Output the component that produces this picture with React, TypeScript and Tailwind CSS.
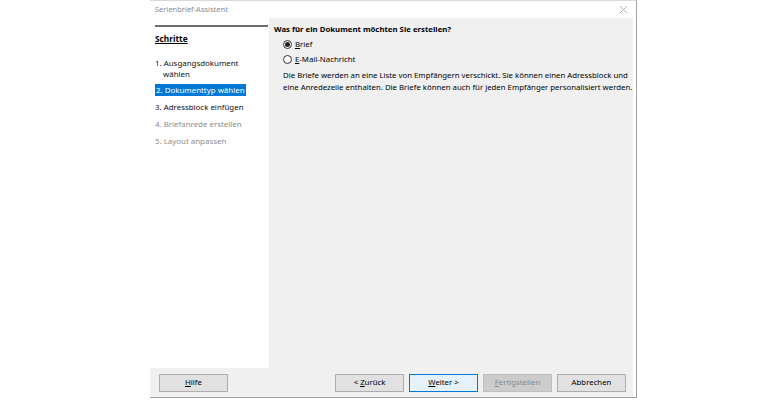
import React from "react";

const font = { fontFamily: '"Noto Sans", "Open Sans", Arial, sans-serif' };

function Btn({ children, variant }: { children: React.ReactNode; variant?: "primary" | "disabled" }) {
  const cls =
    variant === "primary"
      ? "border-[#0078d7] bg-[#e5f1fb] text-[#000]"
      : variant === "disabled"
      ? "border-[#bfbfbf] bg-[#cccccc] text-[#8a8a8a]"
      : "border-[#adadad] bg-[#e1e1e1] text-[#000]";
  return (
    <div className={`w-[69px] h-[18px] border flex items-center justify-center text-[7.8px] leading-none ${cls}`}>
      {children}
    </div>
  );
}

function Radio({ checked }: { checked?: boolean }) {
  return (
    <div className="w-[9px] h-[9px] rounded-full border border-[#333] bg-white flex items-center justify-center">
      {checked && <div className="w-[5px] h-[5px] rounded-full bg-[#222]" />}
    </div>
  );
}

export default function App() {
  return (
    <div className="w-[768px] h-[400px] bg-white pl-[150px]" style={font}>
      <div className="w-[487px] h-[398px] flex flex-col border-t border-t-[#d9d9d9] border-r border-r-[#a0a0a0] border-b border-b-[#a0a0a0] bg-white">
        {/* title bar */}
        <div className="h-[17px] flex items-center justify-between pl-[5px] pr-[8px]">
          <span className="text-[7.5px] text-[#8a8a8a] leading-none">Serienbrief-Assistent</span>
          <svg width="9" height="9" viewBox="0 0 9 9" className="text-[#a8a8a8]">
            <path d="M1 1 L8 8 M8 1 L1 8" stroke="currentColor" strokeWidth="0.9" />
          </svg>
        </div>
        {/* body */}
        <div className="flex flex-1 pr-[3px]">
          <div className="w-[119px] bg-white pl-[5px] pt-[7px] text-[7.9px] leading-[11px]">
            <div className="h-[2px] bg-[#6e6e6e] w-[113px]" />
            <div className="mt-[6px] font-bold underline text-[#000] text-[8.3px]">Schritte</div>
            <div className="mt-[14px] text-[#111]">1. Ausgangsdokument</div>
            <div className="pl-[8px] text-[#111]">wählen</div>
            <div className="mt-[5px]">
              <span className="bg-[#0078d7] text-white px-[1px] py-[1px]">2. Dokumenttyp wählen</span>
            </div>
            <div className="mt-[6px] text-[#111]">3. Adressblock einfügen</div>
            <div className="mt-[6px] text-[#8d8d8d]">4. Briefanrede erstellen</div>
            <div className="mt-[6px] text-[#8d8d8d]">5. Layout anpassen</div>
          </div>
          <div className="flex-1 bg-[#f0f0f0] pl-[5px] pt-[5px] text-[7.8px] leading-[12px] text-[#000]">
            <div className="font-bold text-[#000]">Was für ein Dokument möchten Sie erstellen?</div>
            <div className="pl-[9px] mt-[3px] flex items-center gap-[3px] h-[12px]">
              <Radio checked />
              <span><span className="underline">B</span>rief</span>
            </div>
            <div className="pl-[9px] mt-[3px] flex items-center gap-[3px] h-[12px]">
              <Radio />
              <span><span className="underline">E</span>-Mail-Nachricht</span>
            </div>
            <div className="pl-[9px] mt-[4px] leading-[12px] whitespace-nowrap">
              Die Briefe werden an eine Liste von Empfängern verschickt. Sie können einen Adressblock und
              <br />
              eine Anredezeile enthalten. Die Briefe können auch für jeden Empfänger personalisiert werden.
            </div>
          </div>
        </div>
        {/* footer */}
        <div className="h-[29px] bg-[#f0f0f0] mr-[3px] flex items-start pt-[6px] pl-[9px] pr-[7px]">
          <Btn>
            <span><span className="underline">H</span>ilfe</span>
          </Btn>
          <div className="flex-1" />
          <div className="flex gap-[5px]">
            <Btn>
              <span>&lt; <span className="underline">Z</span>urück</span>
            </Btn>
            <Btn variant="primary">
              <span><span className="underline">W</span>eiter &gt;</span>
            </Btn>
            <Btn variant="disabled">
              <span><span className="underline">F</span>ertigstellen</span>
            </Btn>
            <Btn>
              <span>Abbrechen</span>
            </Btn>
          </div>
        </div>
      </div>
    </div>
  );
}
